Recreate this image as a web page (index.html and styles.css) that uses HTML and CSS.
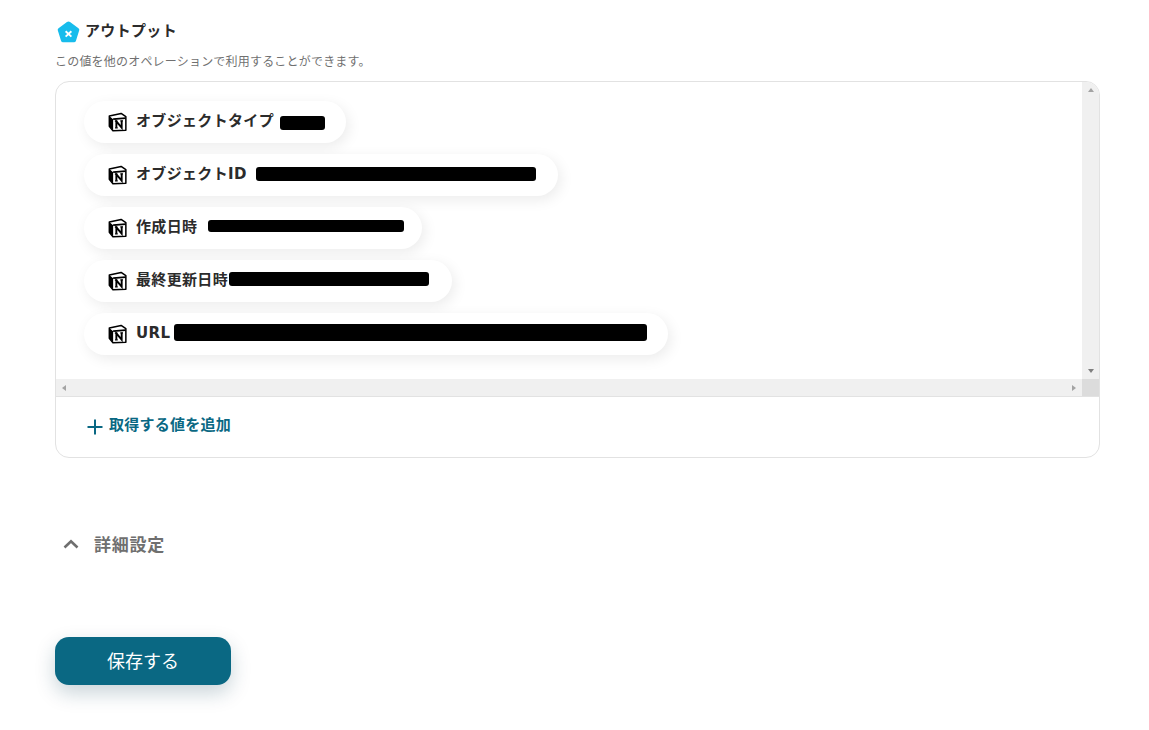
FILE: index.html
```html
<!DOCTYPE html>
<html lang="ja">
<head>
    <meta charset="UTF-8">
    <meta name="viewport" content="width=device-width, initial-scale=1.0">
    <title>アウトプット</title>
    <link rel="stylesheet" href="styles.css">
</head>
<body>
    <svg class="icon-defs" width="0" height="0" aria-hidden="true">
        <symbol id="notion" viewBox="0 0 20 20">
            <path d="M1.4 3.8 L13.8 1 L18.8 4.4 L18.8 18.8 L5.2 19.2 L1.4 14.6 Z" fill="#fff" stroke="#000" stroke-width="1.6" stroke-linejoin="round"/>
            <path d="M1.6 4 L5.4 7 L5.4 19 L1.6 14.6 Z" fill="#000"/>
            <path d="M5.4 7 L18.6 6" fill="none" stroke="#000" stroke-width="1.8"/>
            <path d="M8.8 16 L8.8 9.4 L14.4 16 L14.4 8.8" fill="none" stroke="#000" stroke-width="2"/>
            <path d="M7.2 9.2 L10 9.2 M7.4 16.2 L10.2 16.2 M13 8.8 L15.8 8.8" fill="none" stroke="#000" stroke-width="1.3"/>
        </symbol>
    </svg>

    <main class="page">
        <div class="section-title">
            <svg class="pentagon" viewBox="0 0 24 24" aria-hidden="true">
                <path d="M10.4 1.6 Q12 0.6 13.6 1.6 L22.4 8 Q23.6 8.9 23.2 10.3 L19.8 21 Q19.3 22.6 17.7 22.6 L6.3 22.6 Q4.7 22.6 4.2 21 L0.8 10.3 Q0.4 8.9 1.6 8 Z" fill="#17bcec"/>
                <path d="M9 11.2 L15 16.8 M15 11.2 L9 16.8" stroke="#fff" stroke-width="2"/>
            </svg>
            <h2>アウトプット</h2>
        </div>
        <p class="section-note">この値を他のオペレーションで利用することができます。</p>

        <div class="output-box">
            <div class="scroll-frame">
                <div class="pill-list">
                    <div class="pill">
                        <svg class="notion-icon"><use href="#notion"/></svg>
                        <span class="pill-label">オブジェクトタイプ</span>
                        <span class="redact redact-type"></span>
                    </div>
                    <div class="pill">
                        <svg class="notion-icon"><use href="#notion"/></svg>
                        <span class="pill-label">オブジェクトID</span>
                        <span class="redact redact-id"></span>
                    </div>
                    <div class="pill">
                        <svg class="notion-icon"><use href="#notion"/></svg>
                        <span class="pill-label">作成日時</span>
                        <span class="redact redact-created"></span>
                    </div>
                    <div class="pill">
                        <svg class="notion-icon"><use href="#notion"/></svg>
                        <span class="pill-label">最終更新日時</span>
                        <span class="redact redact-updated"></span>
                    </div>
                    <div class="pill">
                        <svg class="notion-icon"><use href="#notion"/></svg>
                        <span class="pill-label">URL</span>
                        <span class="redact redact-url"></span>
                    </div>
                </div>
                <div class="scrollbar-v">
                    <span class="arrow arrow-up"></span>
                    <span class="arrow arrow-down"></span>
                </div>
                <div class="scrollbar-h">
                    <span class="arrow arrow-left"></span>
                    <span class="arrow arrow-right"></span>
                </div>
                <div class="scroll-corner"></div>
            </div>
            <div class="box-footer">
                <svg class="plus-icon" viewBox="0 0 16 16" aria-hidden="true">
                    <path d="M8 0.5 V15.5 M0.5 8 H15.5" stroke="#0a6883" stroke-width="2"/>
                </svg>
                <span>取得する値を追加</span>
            </div>
        </div>

        <div class="details-row">
            <svg class="chevron" viewBox="0 0 16 10" aria-hidden="true">
                <path d="M1.5 8.5 L8 2.2 L14.5 8.5" fill="none" stroke="#6f6f6f" stroke-width="2.6"/>
            </svg>
            <span>詳細設定</span>
        </div>

        <button class="save-button">保存する</button>
    </main>
</body>
</html>
```

FILE: styles.css
```css
html {
    background: #fff;
}

body {
    margin: 0;
    color: #2b2b2b;
    font-family: "Noto Sans CJK JP", "Noto Sans", sans-serif;
}

.icon-defs {
    position: absolute;
}

.page {
    width: 1045px;
    margin-left: 55px;
    padding: 19px 0 44px;
}

.section-title {
    display: flex;
    align-items: center;
    height: 25px;
    padding-left: 2px;
}

.pentagon {
    width: 23px;
    height: 24px;
    margin-right: 5px;
}

.section-title h2 {
    margin: -3px 0 0;
    font-size: 15px;
    line-height: 22px;
    font-weight: 700;
    letter-spacing: 0.33px;
}

.section-note {
    margin: 8px 0 11px;
    font-size: 12px;
    line-height: 18px;
    letter-spacing: 0.2px;
    color: #707070;
}

.output-box {
    height: 375px;
    border: 1px solid #e2e2e2;
    border-radius: 14px;
    overflow: hidden;
}

.scroll-frame {
    display: grid;
    grid-template-columns: 1fr 17px;
    grid-template-rows: 297px 17px;
    border-bottom: 1px solid #e2e2e2;
}

.pill-list {
    display: flex;
    flex-direction: column;
    gap: 11px;
    padding: 19px 0 0 28px;
}

.pill {
    display: flex;
    align-items: center;
    width: fit-content;
    height: 42px;
    padding-left: 24px;
    border-radius: 21px;
    background: #fff;
    box-shadow: 3px 4px 14px rgba(0, 0, 0, 0.08);
}

.notion-icon {
    width: 19px;
    height: 20px;
    margin-right: 9px;
}

.pill-label {
    font-family: "DejaVu Sans", "Noto Sans CJK JP", sans-serif;
    font-size: 15px;
    line-height: 22px;
    font-weight: 700;
    letter-spacing: 0.33px;
    white-space: nowrap;
    position: relative;
    top: -1px;
}

.redact {
    display: block;
    background: #000;
    border-radius: 3px;
}

.redact-type {
    width: 45px;
    height: 14px;
    margin: 2px 21px 0 6px;
}

.redact-id {
    width: 280px;
    height: 14px;
    margin: -3px 22px 0 9px;
}

.redact-created {
    width: 196px;
    height: 12px;
    margin: -5px 18px 0 11px;
}

.redact-updated {
    width: 200px;
    height: 14px;
    margin: -5px 23px 0 1px;
}

.redact-url {
    width: 473px;
    height: 17px;
    margin: -3px 21px 0 4px;
}

.scrollbar-v {
    display: flex;
    flex-direction: column;
    justify-content: space-between;
    align-items: center;
    padding: 6px 0;
    background: #f0f0f0;
}

.scrollbar-h {
    display: flex;
    justify-content: space-between;
    align-items: center;
    padding: 0 6px;
    background: #f0f0f0;
}

.scroll-corner {
    background: #dcdcdc;
}

.arrow {
    display: block;
    width: 0;
    height: 0;
    border-style: solid;
    border-color: transparent;
}

.arrow-up {
    border-width: 0 3.5px 4px;
    border-bottom-color: #a3a3a3;
}

.arrow-down {
    border-width: 4px 3.5px 0;
    border-top-color: #7f7f7f;
}

.arrow-left {
    border-width: 3.5px 4px 3.5px 0;
    border-right-color: #a3a3a3;
}

.arrow-right {
    border-width: 3.5px 0 3.5px 4px;
    border-left-color: #a3a3a3;
}

.box-footer {
    display: flex;
    align-items: center;
    height: 56px;
    padding-left: 31px;
    font-size: 15px;
    font-weight: 700;
    letter-spacing: 0.25px;
    color: #0a6883;
}

.box-footer span {
    margin-top: -3px;
}

.plus-icon {
    width: 16px;
    height: 16px;
    margin: 3px 6px 0 0;
}

.details-row {
    display: flex;
    align-items: center;
    height: 24px;
    margin-top: 73px;
    padding-left: 8px;
    font-size: 17px;
    font-weight: 700;
    letter-spacing: 0.75px;
    color: #6f6f6f;
}

.chevron {
    width: 16px;
    height: 10px;
    margin: 2px 15px 0 0;
}

.save-button {
    display: block;
    width: 176px;
    height: 48px;
    margin-top: 82px;
    padding-bottom: 4px;
    border: none;
    border-radius: 14px;
    background: #0a6883;
    color: #fff;
    font-family: inherit;
    font-size: 18px;
    box-shadow: 0 8px 20px rgba(11, 60, 80, 0.22);
    cursor: pointer;
}
```
